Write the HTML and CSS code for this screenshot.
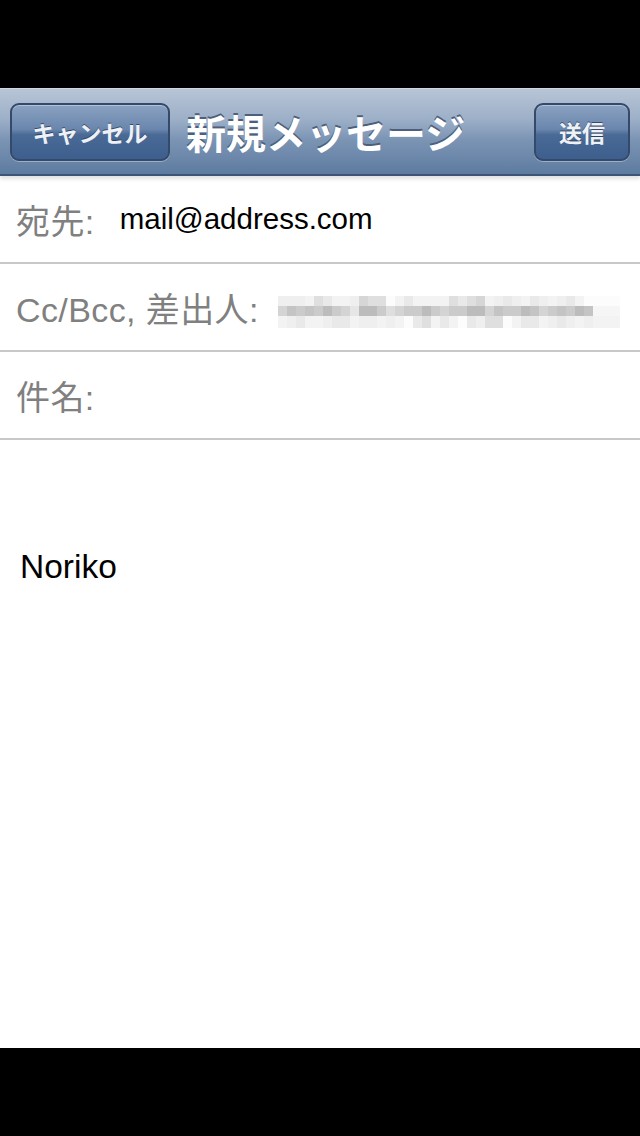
FILE: index.html
```html
<!DOCTYPE html>
<html lang="ja">
<head>
<meta charset="utf-8">
<title>新規メッセージ</title>
<link rel="stylesheet" href="styles.css">
</head>
<body>
<div class="screen">
  <div class="statusbar"></div>
  <header class="navbar">
    <button class="navbtn cancel">キャンセル</button>
    <h1 class="title">新規メッセージ</h1>
    <button class="navbtn send">送信</button>
  </header>
  <main class="compose">
    <div class="field">
      <span class="label">宛先:</span>
      <span class="value">mail@address.com</span>
    </div>
    <div class="field">
      <span class="label">Cc/Bcc, 差出人:</span>
      <div class="blur">
        <div class="brow r1"><i class="c2"></i><i class="c2"></i><i class="c2"></i><i class="c1"></i><i class="c4"></i><i class="c3"></i><i class="c1"></i><i class="c1"></i><i class="c2"></i><i class="c5"></i><i class="c4"></i><i class="c4"></i><i class="c0"></i><i class="c1"></i><i class="c3"></i><i class="c1"></i><i class="c1"></i><i class="c1"></i><i class="c1"></i><i class="c4"></i><i class="c3"></i><i class="c4"></i><i class="c5"></i><i class="c1"></i><i class="c2"></i><i class="c3"></i><i class="c2"></i><i class="c1"></i><i class="c3"></i><i class="c2"></i><i class="c1"></i><i class="c2"></i><i class="c3"></i><i class="c1"></i><i class="c0"></i><i class="c0"></i><i class="c0"></i><i class="c0"></i></div>
        <div class="brow r2"><i class="d3"></i><i class="d1"></i><i class="d2"></i><i class="d1"></i><i class="d2"></i><i class="d0"></i><i class="d2"></i><i class="d3"></i><i class="d5"></i><i class="d0"></i><i class="d0"></i><i class="d2"></i><i class="d4"></i><i class="d3"></i><i class="d2"></i><i class="d2"></i><i class="d0"></i><i class="d2"></i><i class="d3"></i><i class="d2"></i><i class="d2"></i><i class="d0"></i><i class="d0"></i><i class="d3"></i><i class="d1"></i><i class="d2"></i><i class="d2"></i><i class="d0"></i><i class="d1"></i><i class="d3"></i><i class="d2"></i><i class="d1"></i><i class="d2"></i><i class="d0"></i><i class="d1"></i><i class="d6"></i><i class="d6"></i><i class="d6"></i></div>
        <div class="brow r3"><i class="c1"></i><i class="c2"></i><i class="c3"></i><i class="c1"></i><i class="c1"></i><i class="c2"></i><i class="c3"></i><i class="c3"></i><i class="c1"></i><i class="c2"></i><i class="c2"></i><i class="c1"></i><i class="c2"></i><i class="c1"></i><i class="c0"></i><i class="c3"></i><i class="c4"></i><i class="c1"></i><i class="c3"></i><i class="c1"></i><i class="c0"></i><i class="c3"></i><i class="c2"></i><i class="c4"></i><i class="c4"></i><i class="c0"></i><i class="c1"></i><i class="c3"></i><i class="c3"></i><i class="c1"></i><i class="c2"></i><i class="c3"></i><i class="c2"></i><i class="c1"></i><i class="c2"></i><i class="c1"></i><i class="c1"></i><i class="c1"></i></div>
      </div>
    </div>
    <div class="field">
      <span class="label">件名:</span>
    </div>
    <div class="body">
      <p class="signature">Noriko</p>
    </div>
  </main>
  <div class="bottombar"></div>
</div>
</body>
</html>
```

FILE: styles.css
```css
html, body {
  margin: 0;
  padding: 0;
  background: #000;
}

.screen {
  width: 640px;
  height: 1136px;
  display: flex;
  flex-direction: column;
  font-family: "Liberation Sans", "Noto Sans CJK JP", sans-serif;
  overflow: hidden;
}

.statusbar {
  height: 88px;
  flex: none;
  background: #000;
}

.navbar {
  position: relative;
  z-index: 2;
  height: 88px;
  flex: none;
  box-sizing: border-box;
  display: flex;
  align-items: center;
  padding: 0 10px;
  gap: 16px;
  background: linear-gradient(#b8c5d6 0%, #9db0c8 35%, #7b94b4 60%, #5d7ba0 100%);
  border-top: 1px solid #cdd6e2;
  border-bottom: 2px solid #3f5578;
  box-shadow: 0 3px 4px rgba(0, 0, 0, 0.12);
}

.navbtn {
  height: 58px;
  box-sizing: border-box;
  border: 2px solid #35496a;
  border-radius: 9px;
  background: linear-gradient(#8aa2c1 0%, #6a86ad 45%, #4a6a96 55%, #3d5f8d 100%);
  box-shadow: inset 0 1px 0 rgba(255, 255, 255, 0.35), 0 1px 0 rgba(255, 255, 255, 0.35);
  color: #eef1f6;
  font-family: "Liberation Sans", "Noto Sans CJK JP", sans-serif;
  font-weight: bold;
  font-size: 23px;
  text-shadow: 0 -1px 0 rgba(30, 45, 70, 0.7);
  padding: 0;
}

.cancel {
  width: 160px;
}

.send {
  width: 96px;
  margin-left: auto;
}

.title {
  margin: 0;
  color: #fff;
  font-size: 40px;
  font-weight: bold;
  letter-spacing: 0;
  text-shadow: 0 -2px 0 #4d5f7a;
  white-space: nowrap;
}

.compose {
  flex: 1;
  display: flex;
  flex-direction: column;
  background: #fff;
}

.field {
  height: 88px;
  box-sizing: border-box;
  border-bottom: 2px solid #c8c8c8;
  display: flex;
  align-items: center;
  padding-left: 16px;
  gap: 25px;
}

.label {
  color: #808080;
  font-size: 34px;
  letter-spacing: 0.4px;
}

.value {
  color: #000;
  font-size: 29.5px;
}

.blur {
  display: flex;
  flex-direction: column;
  margin-left: -6px;
  margin-top: 10px;
}

.brow {
  display: flex;
  height: 10px;
}

.brow.r3 {
  height: 12px;
}

.brow i {
  display: block;
  width: 9px;
  height: 100%;
}

.c0 { background: #fcfcfc; }
.c1 { background: #f3f3f3; }
.c2 { background: #efefef; }
.c3 { background: #e9e9e9; }
.c4 { background: #dfdfdf; }
.c5 { background: #d6d6d6; }

.d0 { background: #bcbcbc; }
.d1 { background: #c4c4c4; }
.d2 { background: #cbcbcb; }
.d3 { background: #d4d4d4; }
.d4 { background: #dedede; }
.d5 { background: #e6e6e6; }
.d6 { background: #f6f6f6; }

.body {
  flex: 1;
  padding: 0 20px;
}

.signature {
  margin: 108px 0 0;
  font-size: 33.5px;
  color: #000;
}

.bottombar {
  height: 88px;
  flex: none;
  background: #000;
}
```
